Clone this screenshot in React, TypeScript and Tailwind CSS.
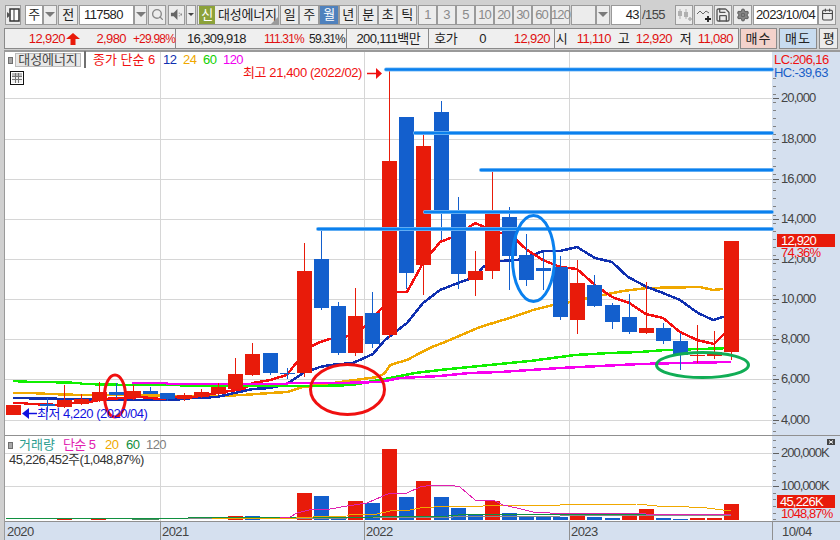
import { ReactNode } from "react";
import { Search, Calendar, Settings, Save } from "lucide-react";

const RED = "#e81b0a";
const BLUE = "#135fcd";
const LINE = "#0a80ee";

// [type, high, bodyTop, bodyBottom, low] in page pixels
type Candle = ["r" | "b", number, number, number, number];
const candles: Candle[] = [
  ["r", 405, 405, 415, 415], ["r", 404, 403, 404, 405], ["b", 398, 404, 406, 412], ["r", 385, 400, 407, 408],
  ["r", 394, 399, 404, 405], ["r", 382, 392, 401, 402], ["b", 383, 392, 395, 398], ["r", 385, 391, 397, 400],
  ["b", 387, 391, 394, 394], ["b", 393, 393, 399, 401], ["r", 393, 395, 399, 401], ["r", 389, 392, 397, 398],
  ["r", 383, 387, 394, 395], ["r", 358, 374, 389, 391], ["r", 343, 354, 375, 376], ["b", 353, 353, 373, 375],
  ["b", 368, 373, 374, 379], ["r", 243, 271, 373, 377], ["b", 228, 259, 308, 310], ["b", 302, 306, 353, 355],
  ["r", 288, 316, 353, 356], ["b", 292, 313, 344, 348], ["r", 70, 161, 335, 338], ["b", 117, 117, 273, 289],
  ["r", 135, 146, 265, 295], ["b", 101, 112, 212, 240], ["b", 197, 212, 274, 289], ["r", 251, 271, 280, 296],
  ["r", 171, 213, 271, 279], ["b", 207, 217, 256, 290], ["b", 234, 255, 280, 286], ["b", 252, 268, 271, 290],
  ["b", 256, 267, 317, 320], ["r", 260, 283, 320, 334], ["b", 275, 285, 306, 307], ["b", 303, 305, 322, 329],
  ["b", 294, 317, 332, 334], ["r", 282, 328, 333, 334], ["b", 323, 328, 341, 344], ["b", 333, 341, 355, 370],
  ["r", 325, 355, 356, 363], ["r", 331, 352, 356, 359], ["r", 241, 241, 352, 360],
];

// [month index, type, top] in page pixels, only months that show a bar
const volumes: [number, "r" | "b", number][] = [
  [13, "r", 516], [14, "b", 516], [17, "r", 493], [18, "b", 496], [19, "b", 517], [20, "r", 501], [21, "b", 503],
  [22, "r", 449], [23, "b", 497], [24, "r", 481], [25, "b", 497], [26, "b", 508], [27, "b", 515], [28, "r", 501],
  [29, "b", 513], [30, "b", 517], [31, "b", 517], [32, "b", 517], [33, "r", 513], [34, "b", 517], [35, "b", 518],
  [36, "r", 514], [37, "r", 509], [38, "b", 518], [39, "b", 519], [40, "r", 518], [41, "r", 518], [42, "r", 504],
];

const ma6 = "13,403 22,403 30,404 60,405 73,403 90,402 103,399 123,398 140,397 160,399 177,397 193,397 217,393 230,391 243,389 253,383 270,380 287,375 293,367 310,347 320,342 330,339 355,335 372,320 380,310 397,292 407,292 423,263 440,242 458,235 475,223 492,230 513,237 527,250 543,260 560,267 577,269 595,285 612,297 629,303 646,314 663,318 680,332 697,340 714,344 723,335 731,330";
const ma12 = "13,398 130,400 173,400 193,398 217,397 230,394 253,389 270,388 287,384 303,373 320,367 330,365 353,363 373,354 385,340 407,323 423,303 440,290 458,283 475,277 483,267 500,261 517,260 533,255 543,251 560,251 577,247 595,258 612,262 628,277 647,287 663,293 680,300 698,313 713,320 723,317 731,317";
const ma24 = "13,393 31,393 50,394 80,395 130,395 170,396 217,396 243,395 270,393 287,392 303,387 320,385 340,382 370,378 378,377 385,373 390,365 407,360 420,353 432,347 445,342 480,327 513,317 533,310 553,305 570,302 603,295 623,291 647,288 700,287 713,290 723,289";
const ma60 = "13,381 31,382 47,382 80,383 82,384 130,385 320,386 352,385 390,378 415,373 440,370 460,368 490,365 510,363 530,361 560,357 575,355 610,353 640,352 665,350 700,349 731,348";
const ma120 = "132,383 167,383 167,384 287,384 287,383 340,383 380,382 400,378 440,376 470,373 500,372 530,370 560,368 600,366 640,364 680,363 731,362";

const vol5 = "280,518 290,517 297,513 313,509 330,509 347,506 367,503 390,493 407,493 420,487 433,485 450,485 460,487 475,500 493,500 503,505 517,508 533,512 550,513 560,513 731,515";
const vol20 = "211,518 280,519 313,517 347,516 349,515 377,514 390,511 410,510 420,508 448,506 483,506 507,505 560,505 637,504 657,506 689,507 707,508 723,510 731,511";
const vol60 = "6,519 373,517 448,516 468,514 731,514";
const vol120 = "6,519 347,518 560,516 731,515";

const gridY = [98.5, 139.5, 179.5, 219.5, 259.5, 299.5, 339.5, 379.5, 420.5];
const gridX = [160.5, 364.5, 569.5];
const priceLabels: [string, number][] = [
  ["20,000", 98], ["18,000", 139], ["16,000", 179], ["14,000", 219], ["12,000", 259],
  ["10,000", 299], ["8,000", 339], ["6,000", 379], ["4,000", 420],
];

const Btn = ({ children, className = "", active = false }: { children?: ReactNode; className?: string; active?: boolean }) => (
  <div
    className={`h-[20px] flex items-center justify-center border border-[#9a9a9a] ${active ? "bg-[#4f81bd] text-white" : "bg-[#ececec]"} ${className}`}
  >
    {children}
  </div>
);

const Caret = ({ className = "" }: { className?: string }) => (
  <Btn className={className}>
    <span className="w-0 h-0 border-l-[5px] border-r-[5px] border-t-[5px] border-l-transparent border-r-transparent border-t-[#7a7a7a]" />
  </Btn>
);

const Line = ({ points, color, width = 2.5 }: { points: string; color: string; width?: number }) => (
  <polyline points={points} fill="none" stroke={color} strokeWidth={width} strokeLinejoin="round" shapeRendering="crispEdges" />
);

const HLine = ({ x, y }: { x: number; y: number }) => (
  <g>
    <line x1={x} y1={y} x2={772} y2={y} stroke="#7fbdf5" strokeWidth={4} strokeLinecap="round" />
    <line x1={x} y1={y} x2={772} y2={y} stroke={LINE} strokeWidth={2.5} strokeLinecap="round" />
  </g>
);

const candleLeft = (i: number) => Math.round(6 + 17.1 * i);

const MainPlot = () => (
  <svg viewBox="5 52 767 383" className="w-[767px] h-[383px] overflow-visible block">
    {gridY.map((y) => (
      <line key={y} x1={5} y1={y} x2={772} y2={y} stroke="#d6d6d6" />
    ))}
    {gridX.map((x) => (
      <line key={x} x1={x} y1={52} x2={x} y2={435} stroke="#d6d6d6" />
    ))}
    <Line points={ma24} color="#f0a800" />
    <Line points={ma12} color="#1030b0" />
    <Line points={ma6} color="#f40f0f" />
    <Line points={ma60} color="#10f000" />
    <Line points={ma120} color="#f800f0" />
    <g shapeRendering="crispEdges">
      {candles.map(([t, hi, top, bot, lo], i) => {
        const left = candleLeft(i);
        const c = t === "r" ? RED : BLUE;
        return (
          <g key={i}>
            <rect x={left + 7} y={hi} width={1} height={lo - hi} fill={c} />
            <rect x={left} y={top} width={15} height={Math.max(bot - top, 1)} fill={c} />
          </g>
        );
      })}
    </g>
    <HLine x={386} y={69.5} />
    <HLine x={415} y={133} />
    <HLine x={481} y={170} />
    <HLine x={425} y={212} />
    <HLine x={318} y={229} />
    <ellipse cx={115} cy={396} rx={10.5} ry={21} fill="none" stroke="#f01010" strokeWidth={3} />
    <ellipse cx={347.5} cy={389.5} rx={37} ry={25} fill="none" stroke="#f01010" strokeWidth={3} />
    <ellipse cx={533.5} cy={258.5} rx={21} ry={43} fill="none" stroke={LINE} strokeWidth={3} />
    <ellipse cx={702.5} cy={365} rx={46} ry={12.5} fill="none" stroke="#10ad55" strokeWidth={3} />
    <text x={362} y={77} textAnchor="end" fontSize={13} letterSpacing={-0.4} fill="#f01010">최고 21,400 (2022/02)</text>
    <path d="M367 73.5h9" stroke="#f01010" strokeWidth={1.5} />
    <path d="M376 68l6 5.5-6 5.5z" fill="#f01010" />
    <path d="M22 413.5l7-5.5v11z" fill="#1010e0" />
    <path d="M28 413.5h9" stroke="#1010e0" strokeWidth={1.5} />
    <text x={37} y={418} fontSize={13} letterSpacing={-0.5} fill="#1010e0">최저 4,220 (2020/04)</text>
  </svg>
);

const VolumePlot = () => (
  <svg viewBox="5 436 767 85" className="w-[767px] h-[85px] block">
    {[453.5, 486.5].map((y) => (
      <line key={y} x1={5} y1={y} x2={772} y2={y} stroke="#d6d6d6" />
    ))}
    {gridX.map((x) => (
      <line key={x} x1={x} y1={436} x2={x} y2={521} stroke="#d6d6d6" />
    ))}
    <g shapeRendering="crispEdges">
      {volumes.map(([i, t, top]) => (
        <rect key={i} x={candleLeft(i)} y={top} width={15} height={520 - top} fill={t === "r" ? RED : BLUE} />
      ))}
      <rect x={13} y={518} width={26} height={1} fill="#e020b0" />
      <rect x={57} y={518} width={15} height={2} fill={RED} />
      <rect x={91} y={518} width={15} height={2} fill={RED} />
      <rect x={107} y={518} width={25} height={1} fill="#e020b0" />
      <rect x={132} y={518} width={27} height={2} fill="#4a8a60" />
    </g>
    <Line points={vol120} color="#8a8a8a" width={1} />
    <Line points={vol60} color="#109040" width={1} />
    <Line points={vol20} color="#f0a800" width={1} />
    <Line points={vol5} color="#e020b0" width={1} />
  </svg>
);

const ticks = (from: number, to: number, step: number) => {
  const out: number[] = [];
  for (let y = from; y < to; y += step) out.push(y);
  return out;
};

const PriceAxis = () => (
  <svg viewBox="772 52 68 383" className="w-[68px] h-[383px] block">
    {ticks(78, 435, 8.03).map((y) => (
      <line key={y} x1={773} y1={Math.round(y) + 0.5} x2={776} y2={Math.round(y) + 0.5} stroke="#808080" />
    ))}
    {priceLabels.map(([t, y]) => (
      <g key={t}>
        <line x1={773} y1={y + 0.5} x2={779} y2={y + 0.5} stroke="#606060" />
        <text x={781} y={y + 4} fontSize={13} letterSpacing={-0.9} fill="#444444">{t}</text>
      </g>
    ))}
    <text x={774} y={64} fontSize={13} letterSpacing={-0.6} fill="#f01010">LC:206,16</text>
    <text x={774} y={77} fontSize={13} letterSpacing={-0.6} fill="#1a5fc8">HC:-39,63</text>
    <rect x={780} y={247} width={60} height={10} fill="#d5e0ef" />
    <rect x={777} y={234} width={58} height={13} fill={RED} />
    <text x={781} y={245} fontSize={13} letterSpacing={-0.8} fill="#ffffff">12,920</text>
    <text x={781} y={257} fontSize={13} letterSpacing={-0.8} fill="#f01010">74,36%</text>
  </svg>
);

const VolumeAxis = () => (
  <svg viewBox="772 436 68 85" className="w-[68px] h-[85px] block">
    {ticks(440, 521, 6.6).map((y) => (
      <line key={y} x1={773} y1={Math.round(y) + 0.5} x2={776} y2={Math.round(y) + 0.5} stroke="#808080" />
    ))}
    <line x1={773} y1={453.5} x2={779} y2={453.5} stroke="#606060" />
    <line x1={773} y1={486.5} x2={779} y2={486.5} stroke="#606060" />
    <text x={781} y={457} fontSize={13} letterSpacing={-1} fill="#444444">200,000K</text>
    <text x={781} y={490} fontSize={13} letterSpacing={-1} fill="#444444">100,000K</text>
    <rect x={777} y={495} width={58} height={13} fill={RED} />
    <text x={780} y={506} fontSize={13} letterSpacing={-0.8} fill="#ffffff">45,226K</text>
    <text x={781} y={518} fontSize={13} letterSpacing={-0.9} fill="#f01010">1048,87%</text>
    <rect x={827} y={439} width={8} height={6} fill="#444444" />
    <path d="M829 440.5l4 3m0-3l-4 3" stroke="#ffffff" strokeWidth={1} />
  </svg>
);

const Square = () => <span className="w-[5px] h-[7px] bg-[#a8a8a8] border border-[#707070]" />;

export default function App() {
  return (
    <div className="w-[840px] h-[540px] overflow-hidden bg-[#d0d0d0] flex flex-col text-[13px] tracking-[-0.6px] text-[#222222] font-['Liberation_Sans','Noto_Sans_CJK_KR',sans-serif]">
      {/* toolbar */}
      <div className="h-[28px] flex items-center pl-[5px] pt-[1px] shrink-0">
        <Btn className="w-[16px] mr-[4px]">
          <svg viewBox="0 0 14 14" className="w-[14px] h-[14px]">
            <rect x="4" y="1" width="9" height="12" fill="#fff" stroke="#333" strokeWidth="1.5" />
            <path d="M8 1v12" stroke="#333" />
            <path d="M5 7l-4-3v6z" fill="#555" />
          </svg>
        </Btn>
        <Btn className="w-[18px] bg-white">주</Btn>
        <Caret className="w-[14px] mr-[1px]" />
        <Btn className="w-[20px] mr-[1px]">전</Btn>
        <Btn className="w-[55px] !bg-white !justify-start pl-[4px]">117580</Btn>
        <Caret className="w-[13px] mr-[1px]" />
        <Btn className="w-[18px] mr-[2px]">
          <Search size={13} color="#888888" strokeWidth={2.5} />
        </Btn>
        <Btn className="w-[17px] mr-[1px]">
          <svg viewBox="0 0 14 14" className="w-[13px] h-[13px]">
            <path d="M1 5h3l4-4v12l-4-4H1z" fill="#666" />
            <path d="M10 5v1M10 8v1M12 6v2" stroke="#666" strokeWidth="1.2" />
          </svg>
        </Btn>
        <Btn className="w-[10px] mr-[1px]">
          <span className="w-0 h-0 border-l-[3px] border-r-[3px] border-t-[3px] border-l-transparent border-r-transparent border-t-[#444444]" />
        </Btn>
        <Btn className="w-[82px] mr-[1px] !justify-start relative">
          <span className="w-[16px] h-[18px] bg-[#8ca23a] text-white flex items-center justify-center mr-[3px] ml-[1px]">신</span>
          <span className="tracking-[-0.2px] whitespace-nowrap">대성에너지</span>
          <span className="absolute right-0 bottom-0 w-0 h-0 border-l-[7px] border-b-[7px] border-l-transparent border-b-[#9a9a9a]" />
        </Btn>
        <Btn className="w-[19px]">일</Btn>
        <Btn className="w-[20px]">주</Btn>
        <Btn active className="w-[20px]">월</Btn>
        <Btn className="w-[18px] mr-[1px]">년</Btn>
        <Btn className="w-[20px]">분</Btn>
        <Btn className="w-[19px]">초</Btn>
        <Btn className="w-[20px] mr-[1px]">틱</Btn>
        <div className="flex text-[#8a8a8a] tracking-[-0.9px]">
          {["1", "3", "5", "10", "20", "30", "60", "120"].map((n) => (
            <Btn key={n} className="w-[19px]">{n}</Btn>
          ))}
        </div>
        <Btn className="w-[25px] ml-[1px]" />
        <Caret className="w-[14px] mr-[1px]" />
        <Btn className="w-[30px] !bg-white !justify-end pr-[1px]">43</Btn>
        <span className="w-[34px] pl-[1px] text-[#444444]">/155</span>
        <Btn className="w-[18px] mr-[1px]">
          <svg viewBox="0 0 16 14" className="w-[16px] h-[14px]">
            <path d="M4 1v10M10 1v10" stroke="#b0b0b0" />
            <rect x="2" y="3" width="4" height="5" fill="#b0b0b0" />
            <rect x="8" y="4" width="4" height="5" fill="#b0b0b0" />
            <path d="M14 9v4M12 11h4" stroke="#b0b0b0" strokeWidth="1.5" />
          </svg>
        </Btn>
        <Btn className="w-[19px] mr-[1px]">
          <svg viewBox="0 0 16 14" className="w-[16px] h-[14px]">
            <path d="M1 6l3-3 3 3 3-3 3 2" fill="none" stroke="#666" />
            <path d="M12 8v6M9 11h6" stroke="#222" strokeWidth="1.8" />
          </svg>
        </Btn>
        <Btn className="w-[18px] mr-[1px]">
          <Save size={16} color="#555555" />
        </Btn>
        <Btn className="w-[19px] mr-[1px]">
          <Settings size={14} color="#666666" fill="#888888" />
        </Btn>
        <Btn className="w-[65px] !bg-white">2023/10/04</Btn>
        <Btn className="w-[18px]">
          <Calendar size={13} color="#444444" />
        </Btn>
      </div>

      {/* quote strip */}
      <div className="h-[22px] pb-[1px] flex shrink-0 ml-[4px]">
        <div className="w-[735px] flex border border-[#8a8a8a] bg-[#efefef] items-center whitespace-nowrap">
          <div className="w-[171px] h-full flex items-center border-r border-[#8a8a8a] text-[#e01010]">
            <span className="w-[60px] text-right">12,920</span>
            <svg viewBox="0 0 14 12" className="w-[14px] h-[12px] ml-[1px]">
              <path d="M7 0l7 6H9.5v6h-5V6H0z" fill="#e81b0a" />
            </svg>
            <span className="w-[46px] text-right">2,980</span>
            <span className="w-[49px] text-right text-[12px] tracking-[-0.8px]">+29.98%</span>
          </div>
          <div className="w-[171px] h-full flex items-center border-r border-[#8a8a8a]">
            <span className="w-[70px] text-right">16,309,918</span>
            <span className="w-[58px] text-right text-[#e01010] text-[12px] tracking-[-0.8px]">111.31%</span>
            <span className="w-[41px] text-right text-[12px] tracking-[-0.8px]">59.31%</span>
          </div>
          <div className="w-[82px] h-full flex items-center justify-end pr-[8px] border-r border-[#8a8a8a]">200,111백만</div>
          <div className="w-[126px] h-full flex items-center border-r border-[#8a8a8a]">
            <span className="w-[28px] text-right">호가</span>
            <span className="w-[29px] text-right">0</span>
            <span className="w-[64px] text-right text-[#e01010]">12,920</span>
          </div>
          <div className="flex-1 flex items-center text-[#e01010]">
            <span className="w-[12px] text-right text-[#222222]">시</span>
            <span className="w-[44px] text-right">11,110</span>
            <span className="w-[18px] text-right text-[#222222]">고</span>
            <span className="w-[43px] text-right">12,920</span>
            <span className="w-[19px] text-right text-[#222222]">저</span>
            <span className="w-[42px] text-right">11,080</span>
          </div>
        </div>
        <div className="w-[37px] ml-[1px] h-[21px] flex items-center justify-center border border-[#8a8a8a] bg-[#f3d2cb] tracking-[1px]">매수</div>
        <div className="w-[38px] ml-[2px] h-[21px] flex items-center justify-center border border-[#8a8a8a] bg-[#c8dcf0] tracking-[1px]">매도</div>
        <div className="w-[19px] ml-[2px] h-[21px] flex items-center justify-center border border-[#8a8a8a] bg-[#ececec]">평</div>
      </div>

      {/* chart */}
      <div className="flex-1 ml-[4px] flex flex-col bg-[#e2e2e2] border-t-2 border-l border-[#9a9a9a] relative">
        <div className="flex h-[383px] border-b border-[#909090] box-content">
          <div className="relative z-10 w-[767px] bg-white">
            <MainPlot />
            <div className="absolute left-[3px] top-[1px] flex items-center h-[14px] whitespace-nowrap">
              <Square />
              <span className="ml-[2px] w-[66px] h-[14px] flex items-center justify-center bg-[#e8e8e8] border border-[#bbbbbb] tracking-[-0.1px] text-[#444444]">대성에너지</span>
              <span className="ml-[3px]"><Square /></span>
              <span className="ml-[7px] w-[70px] tracking-[0] text-[#f01010]">종가 단순 6</span>
              <span className="w-[20px] text-[#1030b0]">12</span>
              <span className="w-[20px] text-[#f0a800]">24</span>
              <span className="w-[20px] text-[#10d000]">60</span>
              <span className="text-[#f000f0]">120</span>
            </div>
            <div className="absolute left-[5px] top-[19px] w-[14px] h-[14px] border border-[#111111] bg-white p-[1px]">
              <div className="w-full h-full grid grid-cols-3 grid-rows-3 gap-px bg-[#777777]">
                {Array.from({ length: 9 }).map((_, i) => (
                  <span key={i} className={i < 3 ? "bg-[#bbbbbb]" : "bg-[#eeeeee]"} />
                ))}
              </div>
            </div>
          </div>
          <div className="w-[68px] bg-[#d5e0ef] border-l border-[#909090] box-content -ml-px">
            <PriceAxis />
          </div>
        </div>
        <div className="flex h-[85px] border-b border-[#909090] box-content">
          <div className="relative w-[767px] bg-white">
            <VolumePlot />
            <div className="absolute left-[3px] top-[1px] flex items-center h-[16px] whitespace-nowrap">
              <Square />
              <span className="ml-[6px] w-[44px] text-[#2a9d8f] tracking-[0]">거래량</span>
              <span className="w-[42px] text-[#e020b0]">단순 5</span>
              <span className="w-[21px] text-[#f0a800]">20</span>
              <span className="w-[20px] text-[#109040]">60</span>
              <span className="text-[#808080]">120</span>
            </div>
            <div className="absolute left-[4px] top-[14px] whitespace-nowrap text-[#333333]">45,226,452주(1,048,87%)</div>
          </div>
          <div className="w-[68px] bg-[#d5e0ef] border-l border-[#909090] box-content -ml-px">
            <VolumeAxis />
          </div>
        </div>
        <div className="flex-1 flex bg-[#d5e0ef] text-[#444444] border-b border-[#909090]">
          <div className="w-[156px] pl-[2px] flex items-center border-r border-[#909090]">2020</div>
          <div className="w-[204px] pl-[1px] flex items-center border-r border-[#909090]">2021</div>
          <div className="w-[205px] pl-[1px] flex items-center border-r border-[#909090]">2022</div>
          <div className="w-[203px] pl-[1px] flex items-center border-r border-[#909090]">2023</div>
          <div className="pl-[9px] flex items-center">10/04</div>
        </div>
      </div>
    </div>
  );
}
